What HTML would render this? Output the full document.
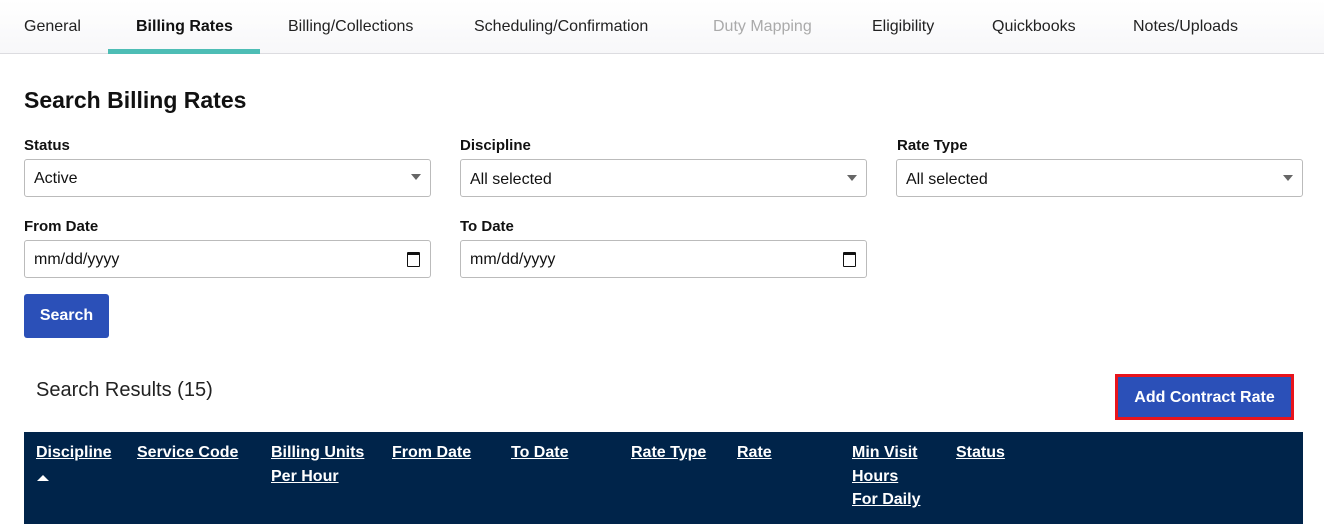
<!DOCTYPE html>
<html><head><style>
body{margin:0;width:1324px;height:524px;overflow:hidden;background:#fff;font-family:"Liberation Sans",sans-serif;color:#111;position:relative}
.a{position:absolute;white-space:nowrap}
.tabs{position:absolute;left:0;top:0;width:1324px;height:53px;background:linear-gradient(#fff,#f7f7f9);border-bottom:1px solid #dcdce0}
.tab{position:absolute;top:18px;font-size:16px;color:#222}
.lbl{position:absolute;font-size:15px;font-weight:bold}
.box{position:absolute;height:35px;border:1px solid #bbb;border-radius:3px;background:#fff;font-size:16px;box-sizing:border-box;padding:8px 9px;line-height:18px}
.arr{position:absolute;right:9px;top:14px;width:0;height:0;border-left:5px solid transparent;border-right:5px solid transparent;border-top:6px solid #666}
.cal{position:absolute;right:10px;top:10px;width:11px;height:11px;border:1.5px solid #111;border-top-width:3px;border-radius:1px}
.th{position:absolute;color:#fff;font-weight:bold;font-size:16px;text-decoration:underline;line-height:23.5px}
</style></head><body>
<div class="tabs">
<div class="tab" style="left:24px">General</div>
<div class="tab" style="left:136px;font-weight:bold;color:#111">Billing Rates</div>
<div class="a" style="left:108px;top:49px;width:152px;height:5px;background:#4dbdb5"></div>
<div class="tab" style="left:288px">Billing/Collections</div>
<div class="tab" style="left:474px">Scheduling/Confirmation</div>
<div class="tab" style="left:713px;color:#aaa">Duty Mapping</div>
<div class="tab" style="left:872px">Eligibility</div>
<div class="tab" style="left:992px">Quickbooks</div>
<div class="tab" style="left:1133px">Notes/Uploads</div>
</div>
<div class="a" style="left:24px;top:87px;font-size:23px;font-weight:bold">Search Billing Rates</div>
<div class="lbl" style="left:24px;top:137px">Status</div>
<div class="lbl" style="left:460px;top:137px">Discipline</div>
<div class="lbl" style="left:897px;top:137px">Rate Type</div>
<div class="box" style="left:24px;top:159px;width:407px;height:38px;padding-top:10px">Active<div class="arr"></div></div>
<div class="box" style="left:460px;top:159px;width:407px;height:38px;padding-top:11px">All selected<div class="arr" style="top:15px"></div></div>
<div class="box" style="left:896px;top:159px;width:407px;height:38px;padding-top:11px">All selected<div class="arr" style="top:15px"></div></div>
<div class="lbl" style="left:24px;top:218px">From Date</div>
<div class="lbl" style="left:460px;top:218px">To Date</div>
<div class="box" style="left:24px;top:240px;width:407px;height:38px;padding-top:10px">mm/dd/yyyy<div class="cal" style="top:11px"></div></div>
<div class="box" style="left:460px;top:240px;width:407px;height:38px;padding-top:10px">mm/dd/yyyy<div class="cal" style="top:11px"></div></div>
<div class="a" style="left:24px;top:294px;width:85px;height:44px;background:#2b50b8;border-radius:3px;color:#fff;font-weight:bold;font-size:16px;line-height:44px;text-align:center">Search</div>
<div class="a" style="left:36px;top:379px;font-size:20px;color:#222">Search Results (15)</div>
<div class="a" style="left:1115px;top:374px;width:179px;height:46px;box-sizing:border-box;border:3px solid #e8141c;background:#2b50b8;color:#fff;font-weight:bold;font-size:16px;line-height:42px;text-align:center">Add Contract Rate</div>
<div class="a" style="left:24px;top:432px;width:1279px;height:92px;background:#00244a"></div>
<div class="th" style="left:36px;top:441px">Discipline<br><span style="display:inline-block;width:0;height:0;border-left:6px solid transparent;border-right:6px solid transparent;border-bottom:6px solid #fff;margin-left:1px"></span></div>
<div class="th" style="left:137px;top:441px">Service Code</div>
<div class="th" style="left:271px;top:441px">Billing Units<br>Per Hour</div>
<div class="th" style="left:392px;top:441px">From Date</div>
<div class="th" style="left:511px;top:441px">To Date</div>
<div class="th" style="left:631px;top:441px">Rate Type</div>
<div class="th" style="left:737px;top:441px">Rate</div>
<div class="th" style="left:852px;top:441px">Min Visit<br>Hours<br>For Daily</div>
<div class="th" style="left:956px;top:441px">Status</div>
</body></html>
